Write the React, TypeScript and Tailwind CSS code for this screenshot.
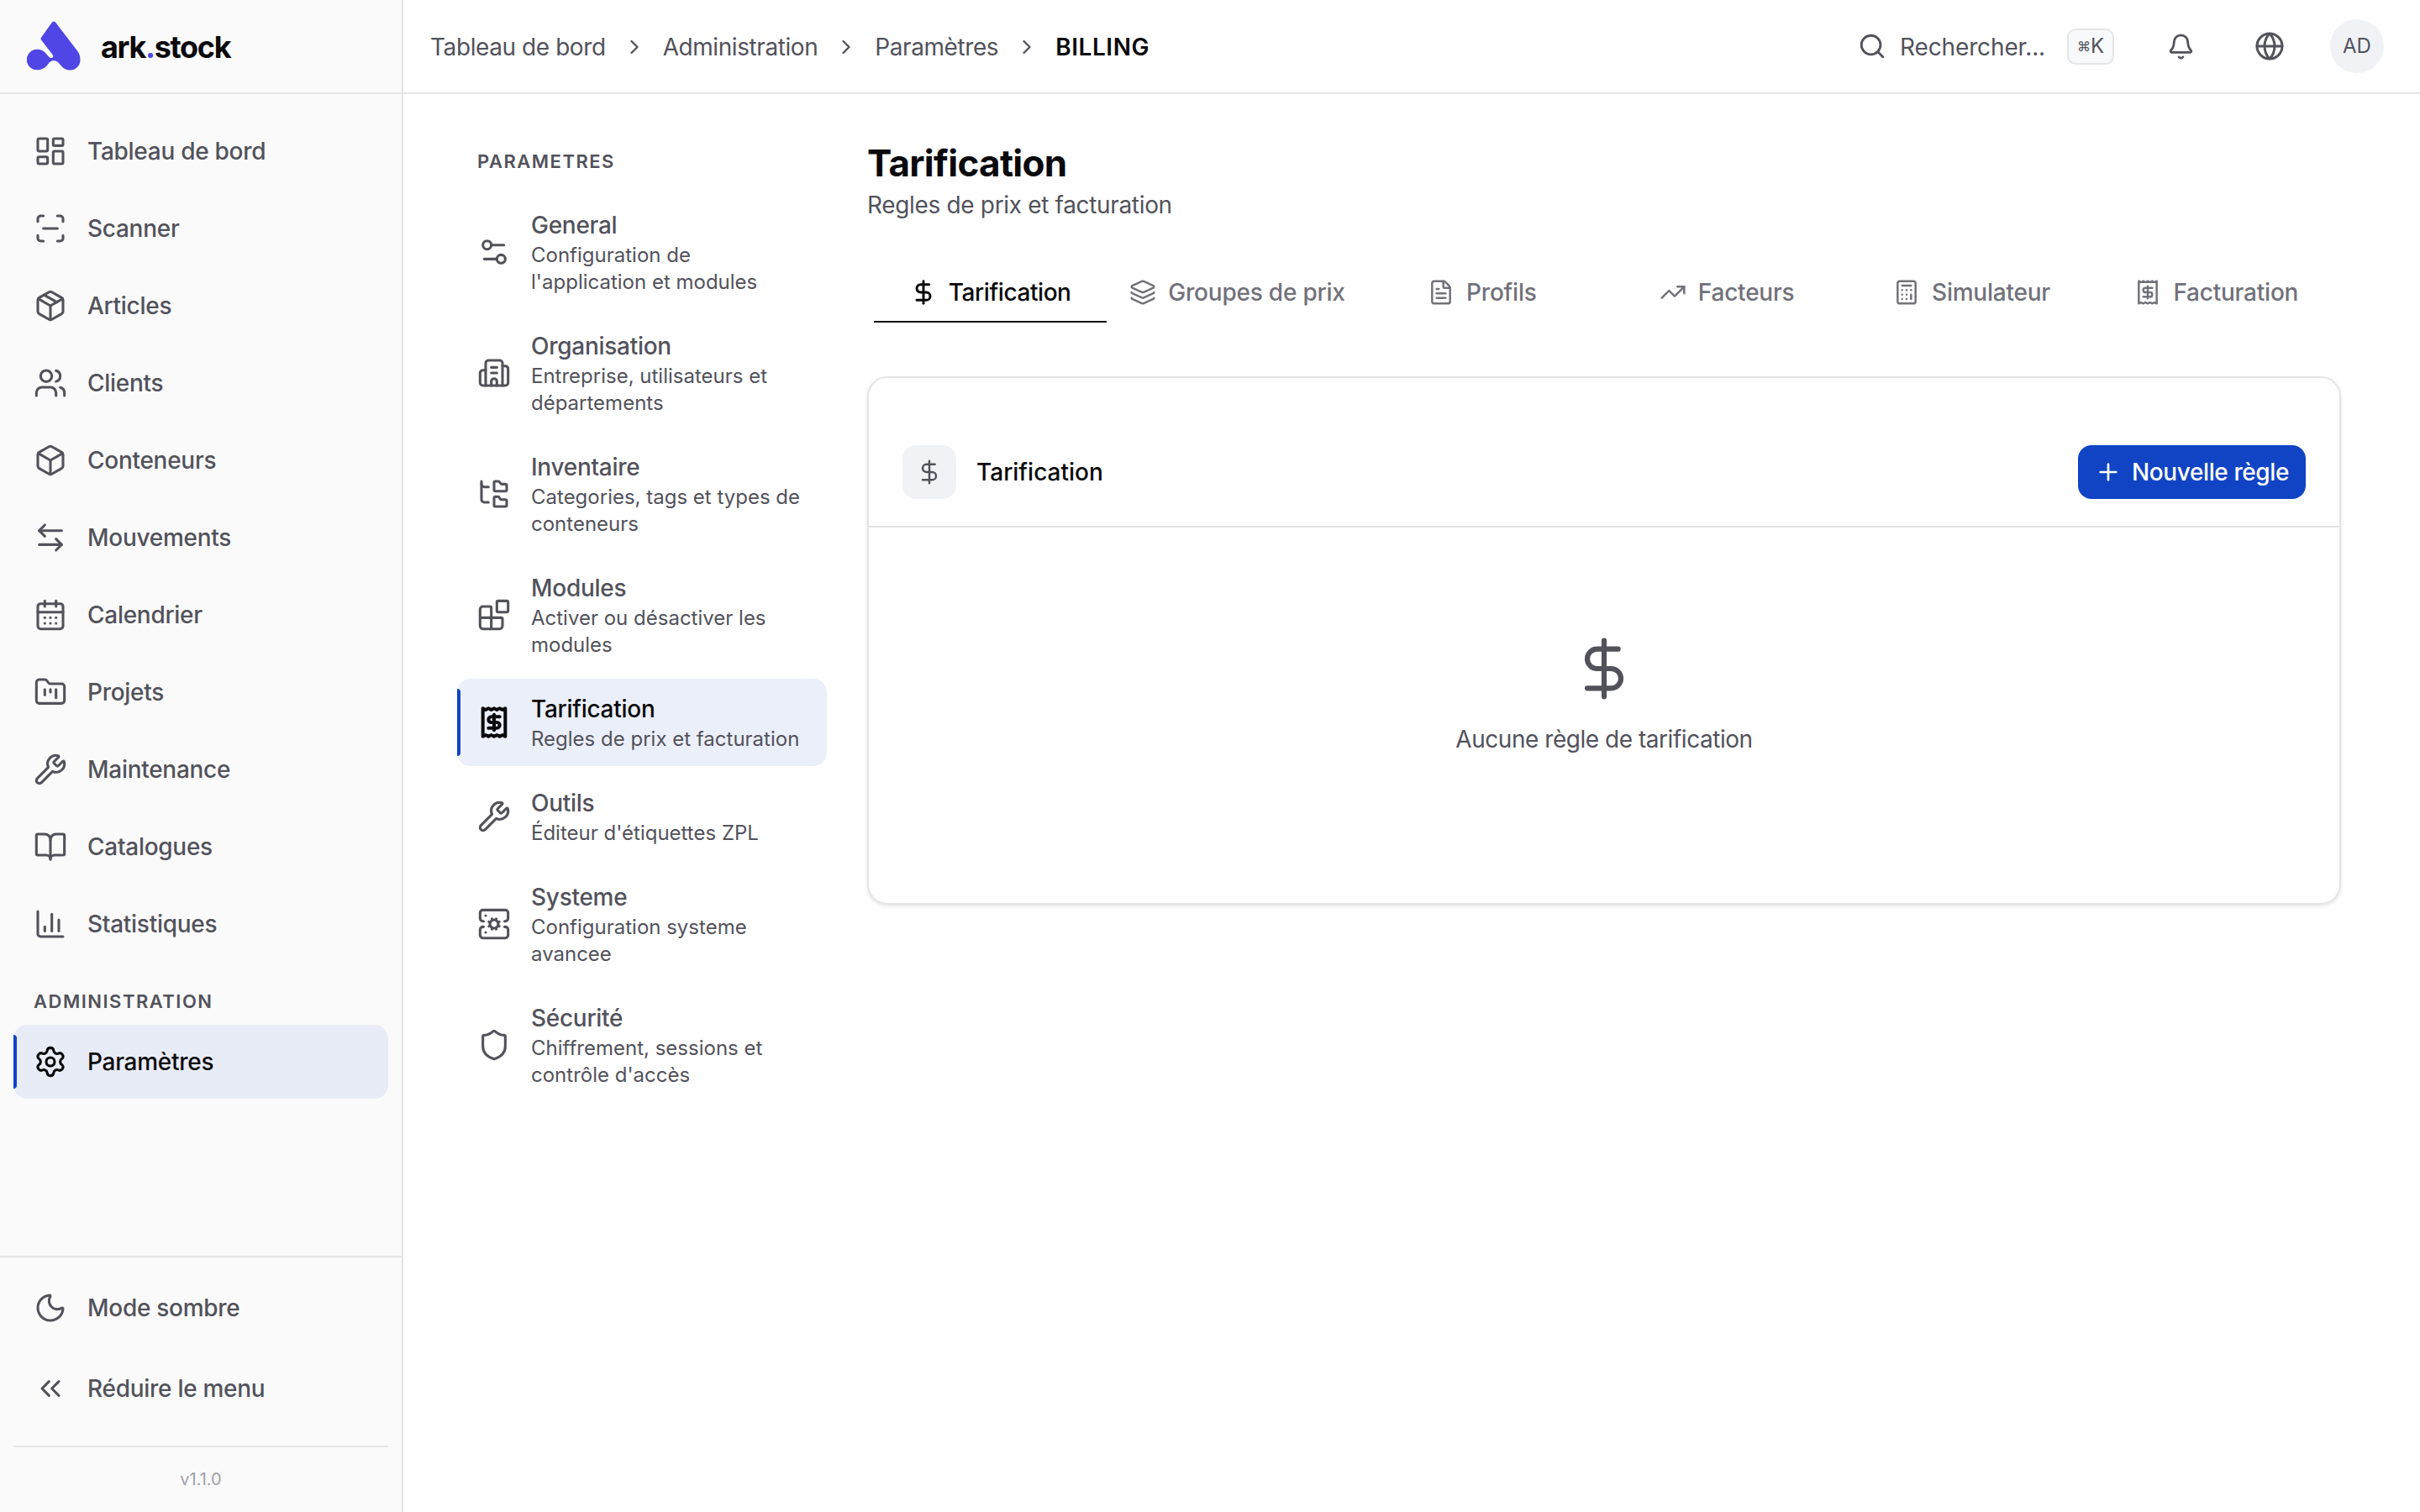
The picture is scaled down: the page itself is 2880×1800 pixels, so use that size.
import React from "react";
import {
  ArrowLeftRight,
  Bell,
  BookOpen,
  Blocks,
  Box,
  Building2,
  Calculator,
  CalendarDays,
  ChartColumn,
  ChevronRight,
  ChevronsLeft,
  DollarSign,
  FileText,
  FolderKanban,
  FolderTree,
  Globe,
  Layers,
  LayoutDashboard,
  Moon,
  Package,
  Plus,
  Receipt,
  ScanLine,
  Search,
  ServerCog,
  Settings,
  Settings2,
  Shield,
  TrendingUp,
  Users,
  Wrench,
} from "lucide-react";

const mainNav = [
  { label: "Tableau de bord", icon: LayoutDashboard },
  { label: "Scanner", icon: ScanLine },
  { label: "Articles", icon: Package },
  { label: "Clients", icon: Users },
  { label: "Conteneurs", icon: Box },
  { label: "Mouvements", icon: ArrowLeftRight },
  { label: "Calendrier", icon: CalendarDays },
  { label: "Projets", icon: FolderKanban },
  { label: "Maintenance", icon: Wrench },
  { label: "Catalogues", icon: BookOpen },
  { label: "Statistiques", icon: ChartColumn },
];

const settingsNav = [
  { title: "General", sub: "Configuration de l'application et modules", icon: Settings2 },
  { title: "Organisation", sub: "Entreprise, utilisateurs et départements", icon: Building2 },
  { title: "Inventaire", sub: "Categories, tags et types de conteneurs", icon: FolderTree },
  { title: "Modules", sub: "Activer ou désactiver les modules", icon: Blocks },
  { title: "Tarification", sub: "Regles de prix et facturation", icon: Receipt, active: true },
  { title: "Outils", sub: "Éditeur d'étiquettes ZPL", icon: Wrench },
  { title: "Systeme", sub: "Configuration systeme avancee", icon: ServerCog },
  { title: "Sécurité", sub: "Chiffrement, sessions et contrôle d'accès", icon: Shield },
];

const tabs = [
  { label: "Tarification", icon: DollarSign, active: true },
  { label: "Groupes de prix", icon: Layers },
  { label: "Profils", icon: FileText },
  { label: "Facteurs", icon: TrendingUp },
  { label: "Simulateur", icon: Calculator },
  { label: "Facturation", icon: Receipt },
];

function Logo() {
  return (
    <svg viewBox="0 0 64 60" className="w-16 h-[60px] shrink-0" fill="#4f46e5">
      <path d="M30 1.5Q32 -0.5 34 1.5L60 35.5Q63.5 40 63.5 46.5A12 12 0 0 1 51.5 58.5Q45 58.5 41 53.5L37 49Q32 45 27 49L23.5 53.5Q19 58.3 12 58.3A12.2 12.2 0 0 1 12 33.8Q19 33.8 23 39L25.5 42Q28 45 30.5 43.5Q32 41.5 30.5 40L17 22.5Q16 20.5 17.5 19Z" />
    </svg>
  );
}

function NavItem({ label, icon: Icon, active }: { label: string; icon: React.ElementType; active?: boolean }) {
  return (
    <div
      className={
        active
          ? "relative h-[88px] flex items-center gap-6 px-6 rounded-2xl bg-[#e8ecf7] text-[#09090b] font-medium"
          : "relative h-[88px] flex items-center gap-6 px-6 rounded-2xl text-[#52525b] font-medium"
      }
    >
      {active && <span className="absolute left-0 top-3 bottom-3 w-1 rounded-r-sm bg-[#1044c4]" />}
      <Icon className="w-10 h-10 shrink-0" strokeWidth={1.85} />
      <span className="text-[28px] leading-10 tracking-[-0.01em]">{label}</span>
    </div>
  );
}

export default function App() {
  return (
    <div className="flex h-screen w-full overflow-hidden bg-white font-['Inter',sans-serif]">
      <aside className="w-[480px] shrink-0 flex flex-col bg-[#fafafa] border-r-2 border-[#e5e5e5]">
        <div className="h-[112px] shrink-0 flex items-center gap-6 pl-8 border-b-2 border-[#e5e5e5]">
          <Logo />
          <span className="pt-[2px] text-[36px] font-bold tracking-[-0.037em] text-[#09090b]">
            ark<span className="text-[#4f46e5]">.</span>stock
          </span>
        </div>
        <nav className="flex flex-col gap-1 px-4 pt-6">
          {mainNav.map((item) => (
            <NavItem key={item.label} label={item.label} icon={item.icon} />
          ))}
          <div className="px-6 pt-7 pb-2 text-[22px] leading-8 font-semibold tracking-[1.5px] text-[#52525b]">
            ADMINISTRATION
          </div>
          <NavItem label="Paramètres" icon={Settings} active />
        </nav>
        <div className="mt-auto border-t-2 border-[#e5e5e5] px-4 pt-4">
          <div className="flex flex-col gap-2">
            <NavItem label="Mode sombre" icon={Moon} />
            <NavItem label="Réduire le menu" icon={ChevronsLeft} />
          </div>
          <div className="mt-6 border-t-2 border-[#e5e5e5] pt-[22px] pb-[23px] text-center text-[20px] leading-8 text-[#a1a1aa]">
            v1.1.0
          </div>
        </div>
      </aside>

      <div className="flex-1 min-w-0 flex flex-col">
        <header className="h-[112px] shrink-0 flex items-center justify-between pl-8 pr-[43px] border-b-2 border-[#e5e5e5]">
          <div className="pt-[2px] flex items-center gap-5 text-[28px] tracking-[-0.015em] text-[#52525b]">
            <span>Tableau de bord</span>
            <ChevronRight className="w-7 h-7" />
            <span>Administration</span>
            <ChevronRight className="w-7 h-7" />
            <span>Paramètres</span>
            <ChevronRight className="w-7 h-7" />
            <span className="font-semibold tracking-[0.02em] text-[#09090b]">BILLING</span>
          </div>
          <div className="flex items-center text-[#52525b]">
            <Search className="w-[34px] h-[34px]" />
            <span className="ml-4 pt-[2px] text-[28px] tracking-[-0.005em]">Rechercher...</span>
            <kbd className="ml-[26px] w-[56px] h-[43px] flex items-center justify-center rounded-[10px] border-2 border-[#e5e5e5] bg-[#f8f9fb] text-[24px] font-normal font-['Inter',sans-serif]">
              <span className="text-[16px]">⌘</span>K
            </kbd>
            <div className="ml-[43px] w-[72px] h-[72px] flex items-center justify-center">
              <Bell className="w-[33px] h-[33px]" />
            </div>
            <div className="ml-[34px] w-[72px] h-[72px] flex items-center justify-center">
              <Globe className="w-9 h-9" />
            </div>
            <div className="ml-9 w-16 h-16 rounded-full bg-[#f1f2f6] flex items-center justify-center text-[24px] font-normal">
              AD
            </div>
          </div>
        </header>

        <div className="flex-1 flex gap-12 pl-16 pr-[94px]">
          <aside className="w-[440px] shrink-0 pt-16">
            <div className="px-6 mb-6 text-[22px] leading-8 font-semibold tracking-[1.5px] text-[#52525b]">PARAMETRES</div>
            <div className="flex flex-col gap-2">
              {settingsNav.map((item) => (
                <div
                  key={item.title}
                  className={
                    item.active
                      ? "relative flex items-center gap-6 pl-6 pr-6 py-4 rounded-2xl bg-[#ebeffa]"
                      : "relative flex items-center gap-6 pl-6 pr-6 py-4 rounded-2xl"
                  }
                >
                  {item.active && <span className="absolute left-0 top-3 bottom-3 w-1 rounded-r-sm bg-[#1044c4]" />}
                  <item.icon
                    className={item.active ? "w-10 h-10 shrink-0 text-[#09090b]" : "w-10 h-10 shrink-0 text-[#52525b]"}
                    strokeWidth={item.active ? 2.4 : 1.85}
                  />
                  <div className="min-w-0">
                    <div
                      className={
                        item.active
                          ? "text-[28px] leading-10 tracking-[-0.01em] font-medium text-[#09090b]"
                          : "text-[28px] leading-10 tracking-[-0.01em] font-medium text-[#52525b]"
                      }
                    >
                      {item.title}
                    </div>
                    <div className="text-[24px] leading-8 text-[#52525b]">{item.sub}</div>
                  </div>
                </div>
              ))}
            </div>
          </aside>

          <main className="flex-1 min-w-0 pt-[52px]">
            <h1 className="pt-[2px] h-14 text-[44px] leading-14 font-bold tracking-[-0.016em] text-[#09090b]">Tarification</h1>
            <p className="mt-1 text-[28px] leading-10 tracking-[-0.012em] text-[#52525b]">Regles de prix et facturation</p>

            <div className="mt-12 pl-2 pr-3 grid grid-cols-6 gap-[14px]">
              {tabs.map((tab) => (
                <div
                  key={tab.label}
                  className={
                    tab.active
                      ? "h-[72px] pt-[2px] flex items-center justify-center gap-[14px] border-b-2 border-[#09090b] text-[28px] tracking-[-0.015em] font-medium text-[#09090b]"
                      : "h-[72px] pt-[2px] pl-[5px] flex items-center justify-center gap-[14px] border-b-2 border-transparent text-[28px] tracking-[-0.008em] font-medium text-[#71717a]"
                  }
                >
                  <tab.icon className="w-8 h-8 shrink-0" strokeWidth={tab.active ? 2.2 : 1.85} />
                  <span>{tab.label}</span>
                </div>
              ))}
            </div>

            <section className="mt-16 rounded-3xl border-2 border-[#e5e5e5] bg-white shadow-[0_2px_4px_rgba(0,0,0,0.1)]">
              <div className="flex items-center justify-between px-[40px] pt-20 pb-8 border-b-2 border-[#e5e5e5]">
                <div className="flex items-center gap-6">
                  <div className="w-16 h-16 rounded-2xl bg-[#f1f2f6] flex items-center justify-center text-[#52525b]">
                    <DollarSign className="w-8 h-8" strokeWidth={1.85} />
                  </div>
                  <h2 className="text-[28px] font-medium text-[#09090b]">Tarification</h2>
                </div>
                <button className="h-16 px-5 rounded-2xl bg-[#1044c4] text-white flex items-center gap-3 text-[28px] tracking-[-0.4px] font-medium">
                  <Plus className="w-8 h-8" />
                  Nouvelle règle
                </button>
              </div>
              <div className="flex flex-col items-center pt-[128px] pb-[175px]">
                <DollarSign className="w-20 h-20 text-[#52525b]" strokeWidth={1.85} />
                <p className="mt-6 text-[28px] leading-10 tracking-[-0.0165em] text-[#52525b]">Aucune règle de tarification</p>
              </div>
            </section>
          </main>
        </div>
      </div>
    </div>
  );
}
